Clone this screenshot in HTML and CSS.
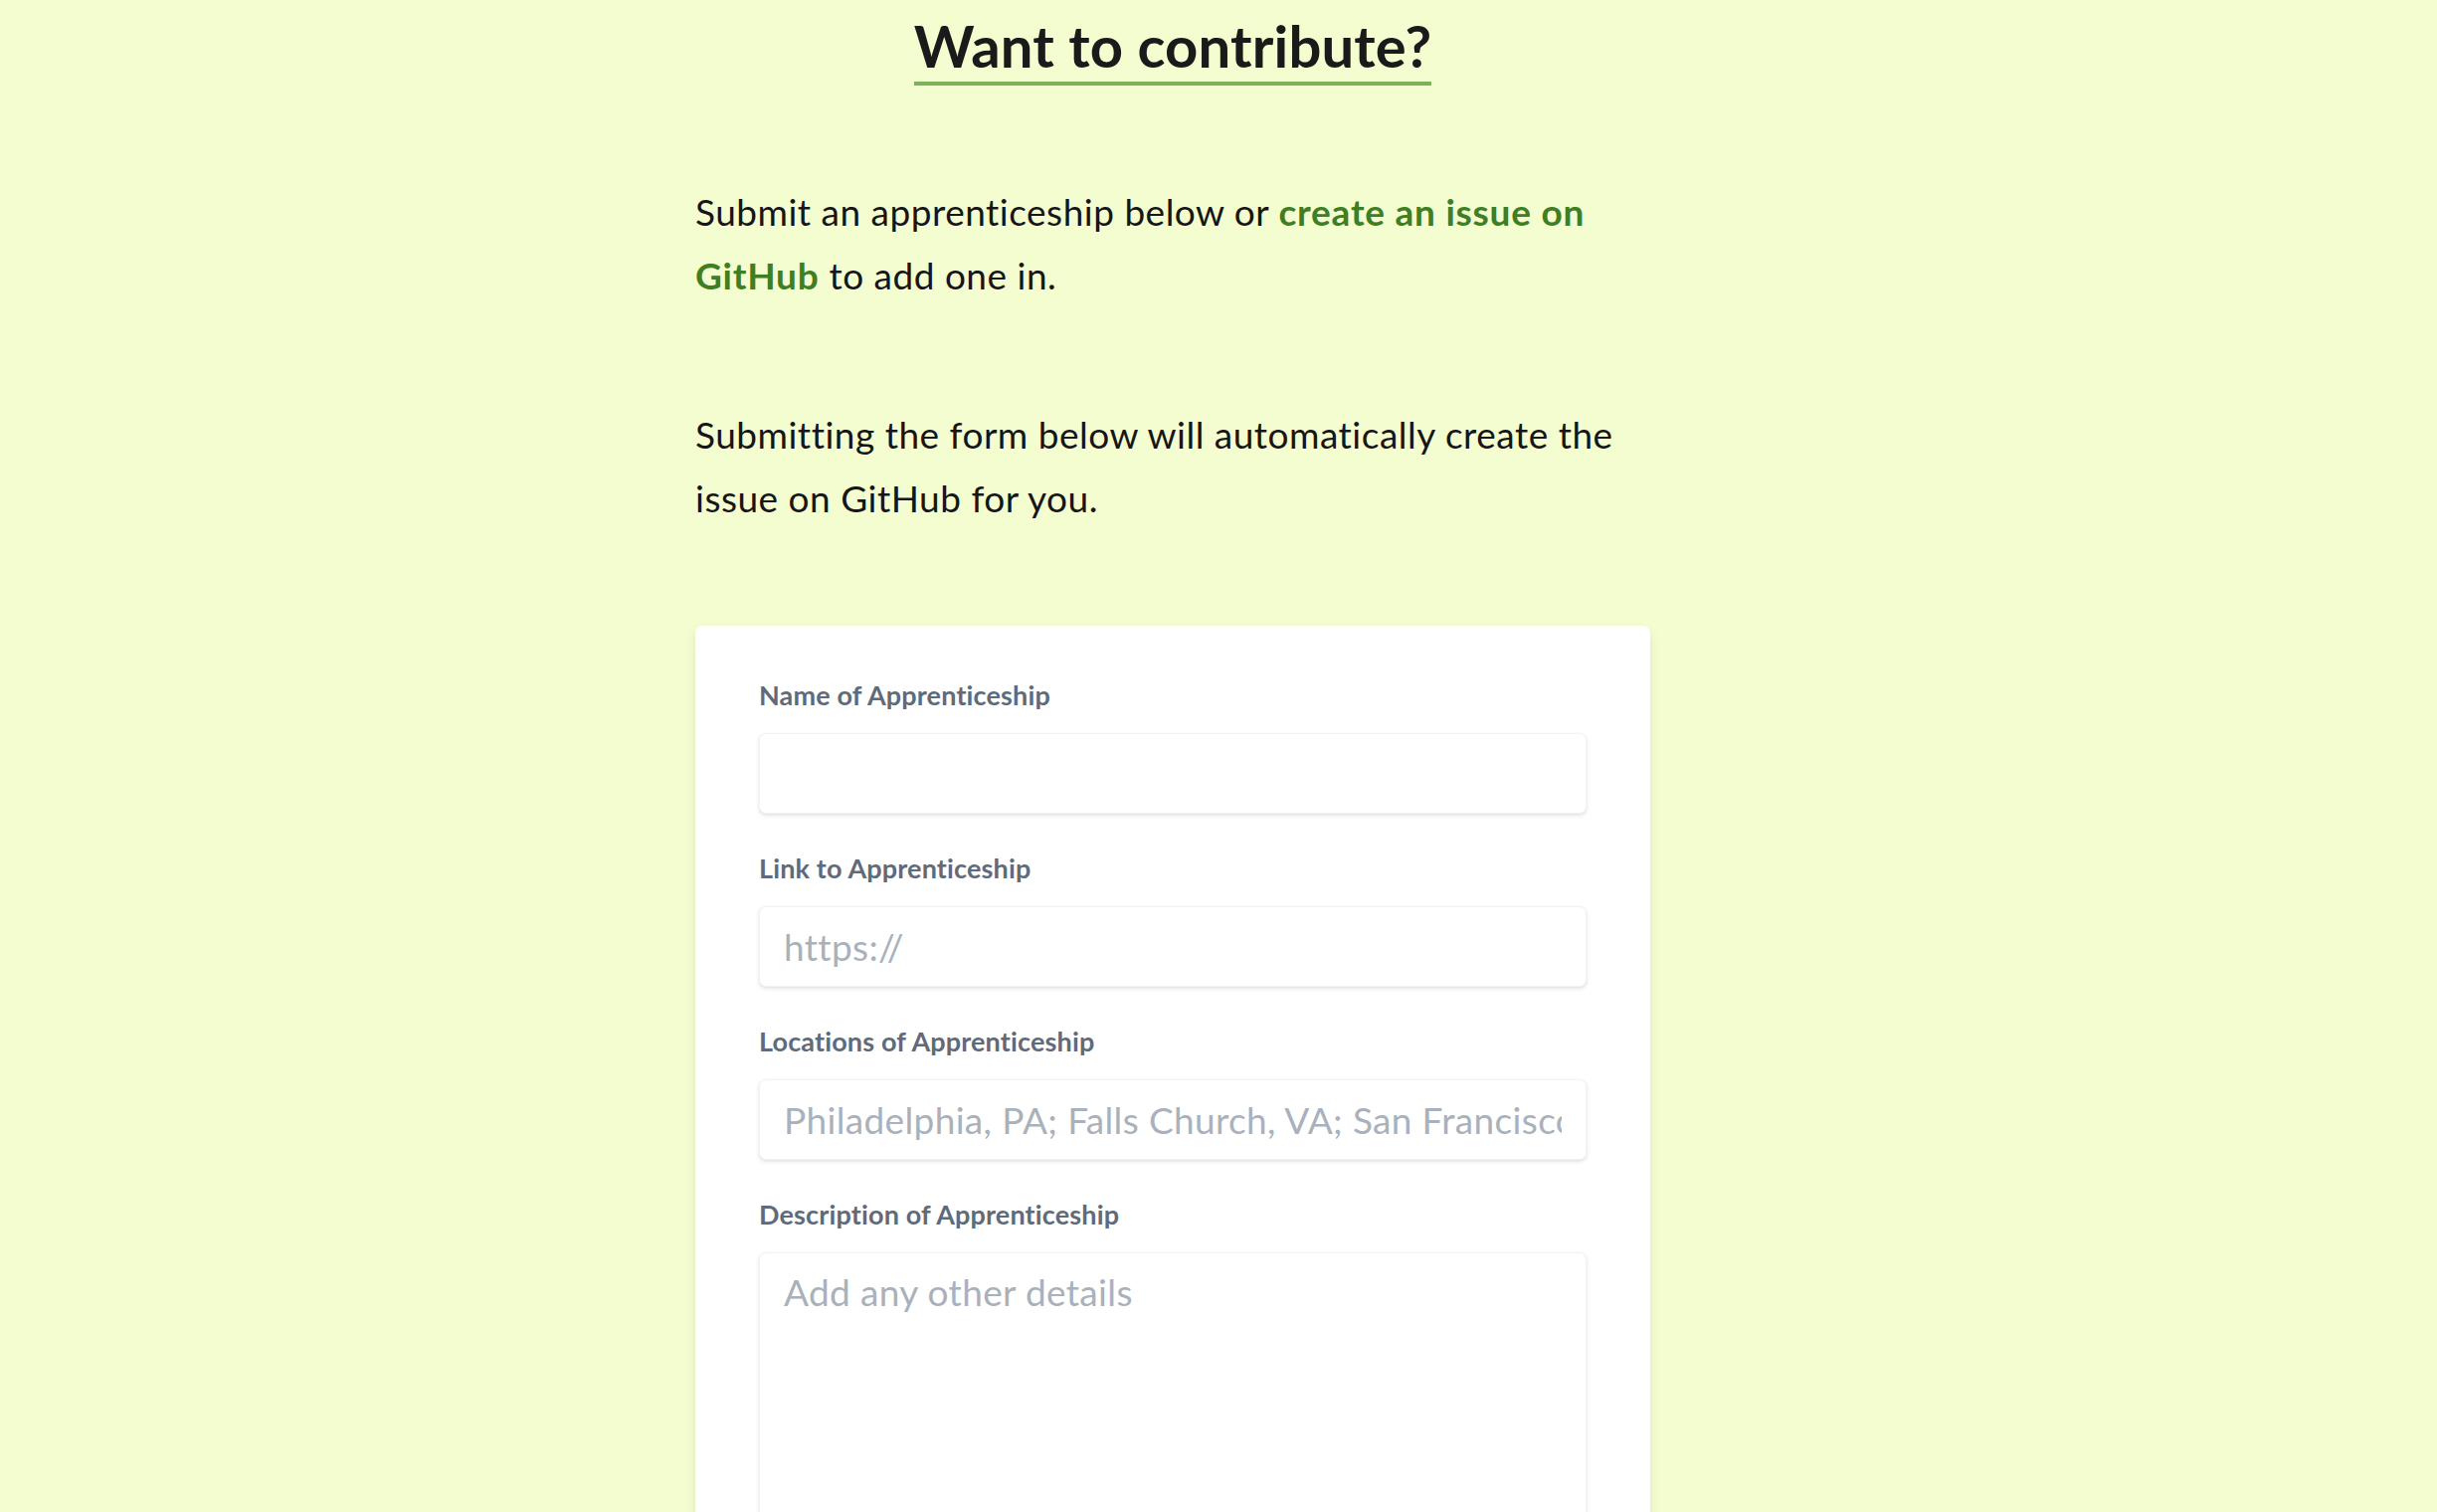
FILE: index.html
```html
<!DOCTYPE html>
<html lang="en">
<head>
<meta charset="utf-8">
<title>Want to contribute?</title>
<link rel="stylesheet" href="styles.css">
</head>
<body>
<main class="page">
  <section class="contribute">
    <h2 class="title">Want to contribute?</h2>
    <div class="content">
      <p class="lead">Submit an apprenticeship below or <a class="link" href="#">create an issue on GitHub</a> to add one in.</p>
      <p class="lead">Submitting the form below will automatically create the issue on GitHub for you.</p>
      <form class="card">
        <div class="field">
          <label class="label" for="name">Name of Apprenticeship</label>
          <input class="input" id="name" type="text">
        </div>
        <div class="field">
          <label class="label" for="link">Link to Apprenticeship</label>
          <input class="input" id="link" type="text" placeholder="https://">
        </div>
        <div class="field">
          <label class="label" for="loc">Locations of Apprenticeship</label>
          <input class="input" id="loc" type="text" placeholder="Philadelphia, PA; Falls Church, VA; San Francisco, CA">
        </div>
        <div class="field">
          <label class="label" for="desc">Description of Apprenticeship</label>
          <textarea class="input textarea" id="desc" placeholder="Add any other details"></textarea>
        </div>
      </form>
    </div>
  </section>
</main>
</body>
</html>
```

FILE: styles.css
```css
html, body {
  margin: 0;
  padding: 0;
}
body {
  background: #f4fdd0;
  color: #1b1b1b;
  font-family: Lato, "Open Sans", "Liberation Sans", sans-serif;
}
.page {
  display: flex;
  justify-content: center;
  padding-right: 92px;
}
.contribute {
  width: 960px;
  display: flex;
  flex-direction: column;
  align-items: center;
}
.title {
  margin: 9px 0 0;
  font-size: 58px;
  line-height: 73px;
  letter-spacing: 0.15px;
  font-weight: 700;
  color: #1a1a1a;
  border-bottom: 4px solid #7bb35a;
}
.content {
  width: 100%;
  margin-top: 95px;
}
.lead {
  margin: 0 0 97px;
  font-size: 37px;
  line-height: 63.5px;
  letter-spacing: 0.5px;
  color: #161616;
}
.link {
  color: #3f7e22;
  font-weight: 700;
  letter-spacing: 0.75px;
  text-decoration: none;
}
.card {
  background: #ffffff;
  border-radius: 7px;
  box-shadow: 0 6px 14px -2px rgba(60, 70, 40, 0.13), 0 3px 6px -2px rgba(0, 0, 0, 0.06);
  padding: 50px 64px 60px;
  display: flex;
  flex-direction: column;
  gap: 35px;
}
.field {
  display: flex;
  flex-direction: column;
  gap: 19px;
}
.label {
  font-size: 27px;
  line-height: 39px;
  letter-spacing: 0.15px;
  font-weight: 700;
  color: #5f6b7a;
}
.input {
  box-sizing: border-box;
  width: 100%;
  height: 81px;
  margin: 0;
  padding: 0 24px;
  border: 1px solid #f3f3f3;
  border-radius: 7px;
  background: #ffffff;
  box-shadow: 0 2px 5px rgba(0, 0, 0, 0.09), 0 1px 3px rgba(0, 0, 0, 0.05);
  font-family: Lato, "Open Sans", "Liberation Sans", sans-serif;
  font-size: 37px;
  letter-spacing: 0.35px;
  color: #4a5568;
  outline: none;
}
.input::placeholder {
  color: #a9b1bc;
  opacity: 1;
}
.textarea {
  height: 320px;
  padding: 14px 24px;
  line-height: 50px;
  resize: none;
  display: block;
}
```
